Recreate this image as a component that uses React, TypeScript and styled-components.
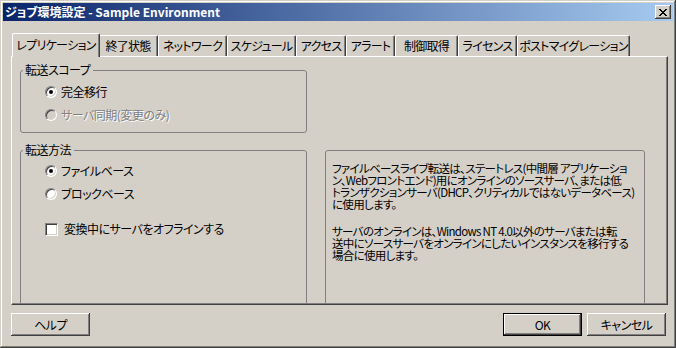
import React from "react";
import styled, { createGlobalStyle, css } from "styled-components";

const GlobalStyle = createGlobalStyle`
  html, body {
    margin: 0;
    padding: 0;
    background: #d4d0c8;
  }
  body {
    font-family: "Noto Sans CJK JP", "Liberation Sans", sans-serif;
    font-size: 12px;
    color: #000;
    font-feature-settings: "palt";
  }
`;

const bevelOut = css`
  box-shadow: inset -1px -1px #404040, inset 1px 1px #ffffff,
    inset -2px -2px #808080, inset 2px 2px #d4d0c8;
`;

const Window = styled.div`
  width: 676px;
  height: 348px;
  box-sizing: border-box;
  padding: 3px;
  background: #d4d0c8;
  box-shadow: inset -1px -1px #404040, inset 1px 1px #d4d0c8,
    inset -2px -2px #808080, inset 2px 2px #ffffff;
  display: flex;
  flex-direction: column;
`;

const TitleBar = styled.div`
  height: 18px;
  display: flex;
  align-items: flex-start;
  padding-left: 2px;
  background: linear-gradient(to right, #0a246a, #a6caf0);
  color: #fff;
  font-weight: bold;
  font-size: 12px;
  line-height: 18px;
  white-space: nowrap;
`;

const CloseButton = styled.div`
  width: 16px;
  height: 14px;
  margin: 2px 2px 0 auto;
  background: #d4d0c8;
  ${bevelOut};
  display: flex;
  align-items: center;
  justify-content: center;
`;

const Body = styled.div`
  padding: 12px 5px 0 8px;
  display: flex;
  flex-direction: column;
`;

const TabStrip = styled.div`
  height: 23px;
  display: flex;
  align-items: flex-end;
  padding-left: 3px;
`;

const Tab = styled.div<{ $width: number; $active?: boolean }>`
  box-sizing: border-box;
  width: ${(p) => p.$width + (p.$active ? 4 : 0)}px;
  height: ${(p) => (p.$active ? 24 : 21)}px;
  margin: ${(p) => (p.$active ? "0 -2px -1px -2px" : "0")};
  position: relative;
  z-index: ${(p) => (p.$active ? 1 : 0)};
  background: #d4d0c8;
  border-top: 1px solid #fff;
  border-left: 1px solid #fff;
  border-right: 1px solid #404040;
  border-radius: 2px 2px 0 0;
  box-shadow: inset -1px 0 #808080;
  display: flex;
  align-items: center;
  justify-content: center;
  padding-bottom: ${(p) => (p.$active ? 2 : 0)}px;
  white-space: nowrap;
  line-height: 12px;
  letter-spacing: -0.7px;
`;

const Panel = styled.div`
  box-sizing: border-box;
  height: 249px;
  border: 1px solid;
  border-color: #fff #404040 #404040 #fff;
  box-shadow: inset -1px -1px #808080;
  overflow: hidden;
  padding: 7px 0 0 8px;
  display: grid;
  grid-template-columns: 287px 320px;
  grid-template-rows: 69px 162px;
  column-gap: 18px;
  row-gap: 11px;
`;

const Group = styled.fieldset<{ $height?: number; $row: number }>`
  grid-column: 1;
  grid-row: ${(p) => p.$row};
  margin: 0;
  padding: 0;
  min-width: 0;
  border: 1px solid #808080;
  border-radius: 3px;
  height: ${(p) => p.$height ?? 69}px;
  box-sizing: border-box;
`;

const Legend = styled.legend`
  margin-left: 2px;
  padding: 0 3px 0 2px;
  font-size: 12px;
  line-height: 12px;
  letter-spacing: -0.5px;
`;

const Options = styled.div<{ $top: number }>`
  display: flex;
  flex-direction: column;
  gap: 7px;
  padding: ${(p) => p.$top}px 0 0 24px;
`;

const Option = styled.label<{ $disabled?: boolean; $gap?: number; $space?: number }>`
  height: 16px;
  display: flex;
  align-items: center;
  gap: ${(p) => p.$gap ?? 4}px;
  margin-top: ${(p) => p.$space ?? 0}px;
  white-space: nowrap;
  line-height: 12px;
  letter-spacing: -0.5px;
  color: ${(p) => (p.$disabled ? "#808080" : "#000")};
  text-shadow: ${(p) => (p.$disabled ? "1px 1px #fff" : "none")};
`;

const RadioMark = styled.span<{ $checked?: boolean; $disabled?: boolean }>`
  box-sizing: border-box;
  width: 12px;
  height: 12px;
  border-radius: 50%;
  border: 1px solid;
  border-color: #808080 #fff #fff #808080;
  background: ${(p) => (p.$disabled ? "#d4d0c8" : "#fff")};
  box-shadow: inset 1px 1px #404040, inset -1px -1px #d4d0c8;
  position: relative;
  flex-shrink: 0;
  ${(p) =>
    p.$checked &&
    css`
      &::after {
        content: "";
        position: absolute;
        left: 3px;
        top: 3px;
        width: 4px;
        height: 4px;
        border-radius: 50%;
        background: #000;
      }
    `}
`;

const CheckMark = styled.span`
  box-sizing: border-box;
  width: 13px;
  height: 13px;
  border: 1px solid;
  border-color: #808080 #fff #fff #808080;
  background: #fff;
  box-shadow: inset 1px 1px #404040, inset -1px -1px #d4d0c8;
  flex-shrink: 0;
`;

const InfoBox = styled.div`
  grid-column: 2;
  grid-row: 2;
  margin-top: 6px;
  height: 170px;
  box-sizing: border-box;
  border: 1px solid #808080;
  border-radius: 3px;
  padding: 11px 0 0 6px;
  font-size: 11.5px;
  line-height: 12px;
  white-space: nowrap;
  letter-spacing: -0.7px;
`;

const Para = styled.p<{ $space?: number }>`
  margin: ${(p) => p.$space ?? 0}px 0 0;
`;

const Footer = styled.div`
  display: flex;
  gap: 5px;
  padding: 8px 7px 0 8px;
`;

const Button = styled.div<{ $default?: boolean }>`
  box-sizing: border-box;
  width: 79px;
  height: 23px;
  display: flex;
  align-items: center;
  justify-content: center;
  background: #d4d0c8;
  letter-spacing: -0.5px;
  ${bevelOut};
  ${(p) =>
    p.$default &&
    css`
      border: 1px solid #000;
    `}
  &:first-child {
    margin-right: auto;
  }
`;

const CloseGlyph = () => (
  <svg width="8" height="7" viewBox="0 0 8 7" shapeRendering="crispEdges">
    <path
      d="M0 0h2v1H0zM6 0h2v1H6zM1 1h2v1H1zM5 1h2v1H5zM2 2h4v1H2zM3 3h2v1H3zM2 4h4v1H2zM1 5h2v1H1zM5 5h2v1H5zM0 6h2v1H0zM6 6h2v1H6z"
      fill="#000"
    />
  </svg>
);

const tabs = [
  { label: "レプリケーション", width: 84 },
  { label: "終了状態", width: 60 },
  { label: "ネットワーク", width: 69 },
  { label: "スケジュール", width: 69 },
  { label: "アクセス", width: 50 },
  { label: "アラート", width: 49 },
  { label: "制御取得", width: 63 },
  { label: "ライセンス", width: 59 },
  { label: "ポストマイグレーション", width: 113 },
];

export default function App() {
  return (
    <>
      <GlobalStyle />
      <Window>
        <TitleBar>
          <span>ジョブ環境設定 - Sample Environment</span>
          <CloseButton>
            <CloseGlyph />
          </CloseButton>
        </TitleBar>
        <Body>
          <TabStrip>
            {tabs.map((t, i) => (
              <Tab key={t.label} $width={t.width} $active={i === 0}>
                {t.label}
              </Tab>
            ))}
          </TabStrip>
          <Panel>
            <Group $row={1}>
              <Legend>転送スコープ</Legend>
              <Options $top={8}>
                <Option>
                  <RadioMark $checked />
                  完全移行
                </Option>
                <Option $disabled>
                  <RadioMark $disabled />
                  サーバ同期(変更のみ)
                </Option>
              </Options>
            </Group>
            <Group $row={2} $height={162}>
              <Legend>転送方法</Legend>
              <Options $top={7}>
                <Option>
                  <RadioMark $checked />
                  ファイルベース
                </Option>
                <Option>
                  <RadioMark />
                  ブロックベース
                </Option>
                <Option $gap={6} $space={12}>
                  <CheckMark />
                  変換中にサーバをオフラインする
                </Option>
              </Options>
            </Group>
            <InfoBox>
              <Para>
                ファイルベースライブ転送は、ステートレス(中間層 アプリケーショ
                <br />
                ン、Webフロントエンド)用にオンラインのソースサーバ、または低
                <br />
                トランザクションサーバ(DHCP、クリティカルではないデータベース)
                <br />
                に使用します。
              </Para>
              <Para $space={15}>
                サーバのオンラインは、Windows NT 4.0以外のサーバまたは転
                <br />
                送中にソースサーバをオンラインにしたいインスタンスを移行する
                <br />
                場合に使用します。
              </Para>
            </InfoBox>
          </Panel>
        </Body>
        <Footer>
          <Button>ヘルプ</Button>
          <Button $default>OK</Button>
          <Button>キャンセル</Button>
        </Footer>
      </Window>
    </>
  );
}
